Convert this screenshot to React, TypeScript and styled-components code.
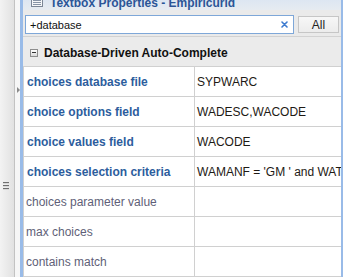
import React from "react";
import styled, { createGlobalStyle } from "styled-components";

const Global = createGlobalStyle`
  html, body { margin: 0; padding: 0; background: #ffffff; }
  body { font-family: "Liberation Sans", Arial, sans-serif; font-size: 12px; }
  #root { width: 343px; height: 277px; overflow: hidden; }
`;

const Page = styled.div`
  display: flex;
  width: 343px;
  height: 277px;
  overflow: hidden;
`;

const Splitter = styled.div`
  flex: none;
  width: 15px;
  box-sizing: border-box;
  background: linear-gradient(to right, #f3f3f3, #e1e1e1);
  border-right: 1px solid #c2c2c2;
  display: flex;
  flex-direction: column;
  align-items: flex-start;
  padding: 182px 0 0 3px;
`;

const Grip = styled.div`
  display: flex;
  flex-direction: column;
  gap: 1px;
`;

const GripLine = styled.span`
  display: block;
  width: 6px;
  height: 1px;
  background: #6f6f6f;
  border-bottom: 1px solid #d8d8d8;
`;

const Strip = styled.div`
  flex: none;
  width: 5px;
  background: #f6f6f6;
  display: flex;
  flex-direction: column;
  align-items: flex-start;
  padding-top: 87px;
  padding-left: 2px;
  box-sizing: border-box;
`;

const Arrow = styled.span`
  display: block;
  width: 0;
  height: 0;
  border-top: 3px solid transparent;
  border-bottom: 3px solid transparent;
  border-left: 3px solid #8a8a8a;
`;

const Panel = styled.div`
  flex: 1;
  min-width: 0;
  display: flex;
  flex-direction: column;
  border-left: 3px solid #99bbe8;
  border-right: 2px solid #99bbe8;
  box-shadow: inset 1px 0 0 #d0d0d0;
`;

const TitleBar = styled.div`
  flex: none;
  height: 10px;
  overflow: hidden;
  display: flex;
  align-items: flex-end;
  gap: 7px;
  padding-left: 8px;
  background: linear-gradient(to bottom, #dde6f2, #e6ebf1);
`;

const TitleIcon = styled.svg`
  flex: none;
  margin-bottom: 3px;
`;

const TitleText = styled.span`
  font-weight: bold;
  font-size: 12px;
  line-height: 14px;
  color: #2b5597;
  white-space: nowrap;
`;

const Toolbar = styled.div`
  flex: none;
  height: 27px;
  box-sizing: border-box;
  padding: 3px 3px 0 2px;
  display: flex;
  align-items: center;
  gap: 4px;
  background: #eaeaea;
  border-bottom: 1px solid #d2d2d2;
`;

const SearchBox = styled.div`
  flex: none;
  width: 269px;
  height: 19px;
  box-sizing: border-box;
  border: 1px solid #7ea7d8;
  background: #ffffff;
  display: flex;
  align-items: center;
  padding: 0 5px 0 4px;
`;

const SearchText = styled.span`
  flex: 1;
  font-size: 11px;
  color: #111111;
`;

const ClearIcon = styled.svg`
  flex: none;
`;

const Button = styled.div`
  flex: none;
  width: 41px;
  height: 17px;
  box-sizing: border-box;
  border: 1px solid #c6c6c6;
  background: linear-gradient(to bottom, #f7f7f7, #ececec);
  display: flex;
  align-items: center;
  justify-content: center;
  font-size: 12px;
  color: #222222;
`;

const GroupHeader = styled.div`
  flex: none;
  height: 30px;
  box-sizing: border-box;
  background: #ebebeb;
  border-bottom: 1px solid #d0d0d0;
  display: flex;
  align-items: center;
  gap: 6px;
  padding: 2px 0 0 7px;
`;

const Collapse = styled.span`
  flex: none;
  width: 8px;
  height: 8px;
  box-sizing: border-box;
  border: 1px solid #8d8d8d;
  background: linear-gradient(to bottom, #ffffff, #d9d9d9);
  display: flex;
  align-items: center;
  justify-content: center;
  &::after {
    content: "";
    display: block;
    width: 4px;
    height: 1px;
    background: #333333;
  }
`;

const GroupTitle = styled.span`
  font-weight: bold;
  font-size: 12px;
  color: #111111;
  white-space: nowrap;
`;

const Grid = styled.div`
  display: grid;
  grid-template-columns: 171px 1fr;
  grid-auto-rows: 30px;
  border-left: 1px solid #d0d0d0;
`;

const LabelCell = styled.div<{ $strong?: boolean }>`
  box-sizing: border-box;
  border-bottom: 1px solid #d0d0d0;
  border-right: 1px solid #d0d0d0;
  display: flex;
  align-items: center;
  padding-left: ${(p) => (p.$strong ? "3px" : "2px")};
  font-size: 12px;
  font-weight: ${(p) => (p.$strong ? "bold" : "normal")};
  color: ${(p) => (p.$strong ? "#2d5d9d" : "#5f5f78")};
  white-space: nowrap;
  overflow: hidden;
`;

const ValueCell = styled.div`
  box-sizing: border-box;
  border-bottom: 1px solid #d0d0d0;
  display: flex;
  align-items: center;
  padding-left: 2px;
  font-size: 12px;
  color: #1e1a14;
  white-space: nowrap;
  overflow: hidden;
`;

const rows: { label: string; value: string; strong: boolean }[] = [
  { label: "choices database file", value: "SYPWARC", strong: true },
  { label: "choice options field", value: "WADESC,WACODE", strong: true },
  { label: "choice values field", value: "WACODE", strong: true },
  { label: "choices selection criteria", value: "WAMANF = 'GM ' and WAT'", strong: true },
  { label: "choices parameter value", value: "", strong: false },
  { label: "max choices", value: "", strong: false },
  { label: "contains match", value: "", strong: false },
];

export default function App() {
  return (
    <>
      <Global />
      <Page>
        <Splitter>
          <Grip>
            <GripLine />
            <GripLine />
            <GripLine />
          </Grip>
        </Splitter>
        <Strip>
          <Arrow />
        </Strip>
        <Panel>
          <TitleBar>
            <TitleIcon width="12" height="12" viewBox="0 0 12 12">
              <rect x="0.5" y="0.5" width="11" height="11" fill="#f4f6f9" stroke="#7b8696" />
              <rect x="1" y="1" width="10" height="2" fill="#9fb2cc" />
              <line x1="2" y1="5.5" x2="10" y2="5.5" stroke="#8794a6" />
              <line x1="2" y1="7.5" x2="10" y2="7.5" stroke="#8794a6" />
              <line x1="2" y1="9.5" x2="10" y2="9.5" stroke="#8794a6" />
            </TitleIcon>
            <TitleText>Textbox Properties - Empiricurid</TitleText>
          </TitleBar>
          <Toolbar>
            <SearchBox>
              <SearchText>+database</SearchText>
              <ClearIcon width="7" height="7" viewBox="0 0 7 7">
                <path d="M1 1 L6 6 M6 1 L1 6" stroke="#3d7bd0" strokeWidth="1.6" strokeLinecap="round" />
              </ClearIcon>
            </SearchBox>
            <Button>All</Button>
          </Toolbar>
          <GroupHeader>
            <Collapse />
            <GroupTitle>Database-Driven Auto-Complete</GroupTitle>
          </GroupHeader>
          <Grid>
            {rows.map((r) => (
              <React.Fragment key={r.label}>
                <LabelCell $strong={r.strong}>{r.label}</LabelCell>
                <ValueCell>{r.value}</ValueCell>
              </React.Fragment>
            ))}
          </Grid>
        </Panel>
      </Page>
    </>
  );
}
